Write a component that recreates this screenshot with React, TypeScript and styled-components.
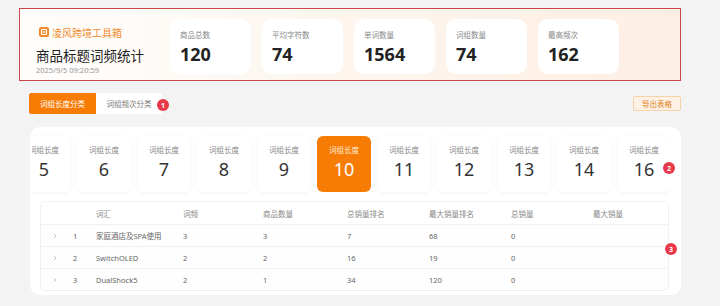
import { useEffect, useRef, useState } from "react";
import styled, { createGlobalStyle } from "styled-components";

const GlobalStyle = createGlobalStyle`
  body {
    margin: 0;
    background: #f3f3f3;
    font-family: "Noto Sans", "Noto Sans CJK SC", sans-serif;
    color: #333;
  }
`;

const Page = styled.div`
  width: 662px;
  padding: 8px 0 12px 19px;
`;

const HeaderFrame = styled.div`
  height: 71px;
  border: 1.5px solid #c9474a;
  background: linear-gradient(90deg, #fffefd 0%, #fdf6ef 45%, #fdeee3 100%);
  display: flex;
  align-items: flex-start;
  padding-left: 16px;
`;

const Brand = styled.div`
  width: 134px;
  padding-top: 16px;
  display: flex;
  flex-direction: column;
`;

const BrandRow = styled.div`
  display: flex;
  align-items: center;
  gap: 3px;
  padding-left: 3px;
  height: 14px;
  font-size: 10px;
  color: #f08a2c;
`;

const Title = styled.div`
  margin-top: 8px;
  font-size: 13.5px;
  line-height: 18px;
  color: #222;
`;

const DateText = styled.div`
  font-size: 7.5px;
  line-height: 10px;
  color: #999;
`;

const StatList = styled.div`
  display: flex;
  gap: 11px;
  padding-top: 10px;
`;

const StatCard = styled.div`
  width: 81px;
  height: 55px;
  box-sizing: border-box;
  background: #fff;
  border-radius: 10px;
  padding: 11px 10px 0 10px;
`;

const StatLabel = styled.div`
  font-size: 7.5px;
  line-height: 11px;
  color: #888;
`;

const StatValue = styled.div`
  margin-top: 2px;
  font-size: 18px;
  line-height: 22px;
  font-weight: 700;
  color: #222;
`;

const Toolbar = styled.div`
  margin-top: 12px;
  padding: 0 0 0 10px;
  display: flex;
  align-items: center;
  justify-content: space-between;
`;

const Tabs = styled.div`
  position: relative;
  display: flex;
`;

const Tab = styled.button<{ active?: boolean }>`
  height: 21px;
  width: ${(p) => (p.active ? "67px" : "66px")};
  border: none;
  outline: none;
  padding: 0;
  font-family: inherit;
  font-size: 7.5px;
  cursor: pointer;
  border-radius: ${(p) => (p.active ? "2px 0 0 2px" : "0 2px 2px 0")};
  background: ${(p) => (p.active ? "#f77c06" : "#fff")};
  color: ${(p) => (p.active ? "#fff" : "#777")};
`;

const Badge = styled.span<{ left: number; top: number }>`
  position: absolute;
  left: ${(p) => p.left}px;
  top: ${(p) => p.top}px;
  width: 12px;
  height: 12px;
  border-radius: 50%;
  background: #e8394a;
  color: #fff;
  font-size: 7px;
  font-weight: 700;
  display: flex;
  align-items: center;
  justify-content: center;
`;

const ExportButton = styled.button`
  height: 15px;
  width: 48px;
  padding: 0;
  border: 1px solid #f6d2a9;
  border-radius: 2px;
  background: #fdf1e3;
  color: #e2801f;
  font-family: inherit;
  font-size: 7.5px;
  cursor: pointer;
`;

const Panel = styled.div`
  position: relative;
  margin: 13px 0 0 11px;
  padding: 6px 10px 4px 2px;
  background: #fff;
  border-radius: 10px;
`;

const LengthScroller = styled.div`
  overflow-x: auto;
  scrollbar-width: none;
  padding: 3px 0 6px;
  &::-webkit-scrollbar {
    display: none;
  }
`;

const LengthRow = styled.div`
  display: flex;
  gap: 6px;
  width: max-content;
`;

const LengthCard = styled.div<{ active?: boolean }>`
  width: 54px;
  height: 56px;
  box-sizing: border-box;
  padding-top: 9px;
  border-radius: 6px;
  text-align: center;
  background: ${(p) => (p.active ? "#f77c06" : "#fff")};
  box-shadow: ${(p) =>
    p.active ? "none" : "0 1px 4px rgba(0, 0, 0, 0.05)"};
  color: ${(p) => (p.active ? "#fff" : "#333")};
`;

const LengthLabel = styled.div<{ active?: boolean }>`
  font-size: 7.5px;
  line-height: 11px;
  color: ${(p) => (p.active ? "#ffe9d4" : "#888")};
`;

const LengthValue = styled.div`
  margin-top: 2px;
  font-size: 18px;
  line-height: 22px;
`;

const Table = styled.div`
  margin: 3px 2px 0 8px;
  border: 1px solid #f0f0f0;
  border-radius: 6px;
  overflow: hidden;
  font-size: 7.5px;
`;

const Row = styled.div<{ head?: boolean }>`
  display: grid;
  grid-template-columns: 21px 23px 87px 80px 84px 82px 82px 82px 1fr;
  align-items: center;
  height: ${(p) => (p.head ? "22px" : "21px")};
  padding-left: 11px;
  border-top: ${(p) => (p.head ? "none" : "1px solid #f1f1f1")};
  color: ${(p) => (p.head ? "#888" : "#666")};
  background: ${(p) => (p.head ? "#fff" : "#fefefe")};
`;

const Cell = styled.span`
  white-space: nowrap;
`;

const Chevron = () => (
  <svg width="6" height="6" viewBox="0 0 6 6">
    <path d="M2 1 L4 3 L2 5" fill="none" stroke="#b5b5b5" strokeWidth="0.8" />
  </svg>
);

const Logo = () => (
  <svg width="10" height="10" viewBox="0 0 10 10">
    <rect width="10" height="10" rx="2" fill="#f08a2c" />
    <rect x="2.5" y="2.5" width="5" height="5" rx="1" fill="none" stroke="#fff" strokeWidth="1.2" />
    <rect x="4" y="4.4" width="2" height="1.2" fill="#fff" />
  </svg>
);

const stats = [
  { label: "商品总数", value: "120" },
  { label: "平均字符数", value: "74" },
  { label: "单词数量", value: "1564" },
  { label: "词组数量", value: "74" },
  { label: "最高频次", value: "162" },
];

const lengths = [5, 6, 7, 8, 9, 10, 11, 12, 13, 14, 16];

const columns = ["", "", "词汇", "词频", "商品数量", "总销量排名", "最大销量排名", "总销量", "最大销量"];

const rows = [
  { id: 1, word: "家庭酒店及SPA使用", freq: 3, count: 3, rank: 7, maxRank: 68, sales: 0 },
  { id: 2, word: "SwitchOLED", freq: 2, count: 2, rank: 16, maxRank: 19, sales: 0 },
  { id: 3, word: "DualShock5", freq: 2, count: 1, rank: 34, maxRank: 120, sales: 0 },
];

const App = () => {
  const [mode, setMode] = useState<"length" | "freq">("length");
  const [selected, setSelected] = useState(10);
  const scrollRef = useRef<HTMLDivElement>(null);

  useEffect(() => {
    if (scrollRef.current) {
      scrollRef.current.scrollLeft = scrollRef.current.scrollWidth;
    }
  }, []);

  return (
    <Page>
      <GlobalStyle />
      <HeaderFrame>
        <Brand>
          <BrandRow>
            <Logo />
            凌风跨境工具箱
          </BrandRow>
          <Title>商品标题词频统计</Title>
          <DateText>2025/9/5 09:20:59</DateText>
        </Brand>
        <StatList>
          {stats.map((s) => (
            <StatCard key={s.label}>
              <StatLabel>{s.label}</StatLabel>
              <StatValue>{s.value}</StatValue>
            </StatCard>
          ))}
        </StatList>
      </HeaderFrame>

      <Toolbar>
        <Tabs>
          <Tab active={mode === "length"} onClick={() => setMode("length")}>
            词组长度分类
          </Tab>
          <Tab active={mode === "freq"} onClick={() => setMode("freq")}>
            词组频次分类
          </Tab>
          <Badge left={128} top={6}>1</Badge>
        </Tabs>
        <ExportButton>导出表格</ExportButton>
      </Toolbar>

      <Panel>
        <LengthScroller ref={scrollRef}>
          <LengthRow>
            {lengths.map((n) => (
              <LengthCard
                key={n}
                active={n === selected}
                onClick={() => setSelected(n)}
              >
                <LengthLabel active={n === selected}>词组长度</LengthLabel>
                <LengthValue>{n}</LengthValue>
              </LengthCard>
            ))}
          </LengthRow>
        </LengthScroller>
        <Badge left={633} top={35}>2</Badge>

        <Table>
          <Row head>
            {columns.map((c, i) => (
              <Cell key={i}>{c}</Cell>
            ))}
          </Row>
          {rows.map((r) => (
            <Row key={r.id}>
              <Cell>
                <Chevron />
              </Cell>
              <Cell>{r.id}</Cell>
              <Cell>{r.word}</Cell>
              <Cell>{r.freq}</Cell>
              <Cell>{r.count}</Cell>
              <Cell>{r.rank}</Cell>
              <Cell>{r.maxRank}</Cell>
              <Cell>{r.sales}</Cell>
              <Cell />
            </Row>
          ))}
        </Table>
        <Badge left={635} top={116}>3</Badge>
      </Panel>
    </Page>
  );
};

export default App;
